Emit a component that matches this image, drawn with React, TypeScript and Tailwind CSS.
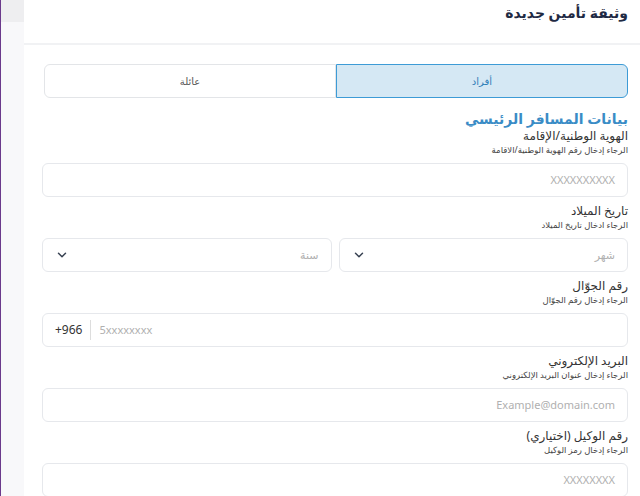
import React from 'react';

const Chevron = () => (
  <svg width="14" height="14" viewBox="0 0 24 24" fill="none" stroke="#374151" strokeWidth="2.5" strokeLinecap="round" strokeLinejoin="round">
    <path d="M6 9l6 6 6-6" />
  </svg>
);

function Field({ label, hint, children }: { label: string; hint: string; children: React.ReactNode }) {
  return (
    <div>
      <div className="text-[12px] leading-[16px] text-[#333]">{label}</div>
      <div className="text-[8.5px] leading-[12px] text-[#444] mb-[7px]">{hint}</div>
      {children}
    </div>
  );
}

const box = 'h-[34px] shrink-0 rounded-[6px] border border-[#e6e8ec] bg-white flex items-center px-3 text-[11px] text-[#b0b0b0]';

export default function App() {
  return (
    <div className="w-[640px] h-[496px] overflow-hidden flex bg-white" style={{ fontFamily: '"Noto Sans", "DejaVu Sans", sans-serif' }}>
      <div className="w-[24px] shrink-0 border-l border-[#6b3a8c] bg-[#f8f8fa] flex flex-col">
        <div className="h-[22px] bg-[#eeeef0]" />
      </div>
      <div dir="rtl" className="flex-1 flex flex-col">
        <div className="h-[45px] shrink-0 border-b-2 border-[#f1f2f4] px-3 pt-[2px] text-[14px] font-semibold text-[#1f2a44]">
          وثيقة تأمين جديدة
        </div>
        <div className="pr-3 pl-[18px] pt-[19px] flex flex-col">
          <div className="flex h-[34px] mb-[12px] ml-[2px] shrink-0">
            <div className="flex-1 rounded-r-[6px] border border-[#3d9bd6] bg-[#d5e8f4] flex items-center justify-center text-[10px] text-[#2f7fb8]">أفراد</div>
            <div className="flex-1 rounded-l-[6px] border border-[#e3e5e8] flex items-center justify-center text-[10px] text-[#555]">عائلة</div>
          </div>
          <div className="text-[14px] font-semibold text-[#3a8cc6] leading-[18px]">بيانات المسافر الرئيسي</div>
          <div className="flex flex-col gap-[6px]">
            <Field label="الهوية الوطنية/الإقامة" hint="الرجاء إدخال رقم الهوية الوطنية/الاقامة">
              <div className={box}>XXXXXXXXXX</div>
            </Field>
            <Field label="تاريخ الميلاد" hint="الرجاء ادخال تاريخ الميلاد">
              <div className="flex gap-[7px]">
                <div className={box + ' flex-1 justify-between'}><span>شهر</span><Chevron /></div>
                <div className={box + ' flex-1 justify-between'}><span>سنة</span><Chevron /></div>
              </div>
            </Field>
            <Field label="رقم الجوّال" hint="الرجاء إدخال رقم الجوّال">
              <div className={box + ' gap-2'} dir="ltr">
                <span className="text-[#333] text-[12px] pr-2 border-r border-[#ddd] leading-[20px]">+966</span>
                <span>5xxxxxxxx</span>
              </div>
            </Field>
            <Field label="البريد الإلكتروني" hint="الرجاء إدخال عنوان البريد الإلكتروني">
              <div className={box}>Example@domain.com</div>
            </Field>
            <Field label="رقم الوكيل (اختياري)" hint="الرجاء إدخال رمز الوكيل">
              <div className={box}>XXXXXXXX</div>
            </Field>
          </div>
        </div>
      </div>
    </div>
  );
}
